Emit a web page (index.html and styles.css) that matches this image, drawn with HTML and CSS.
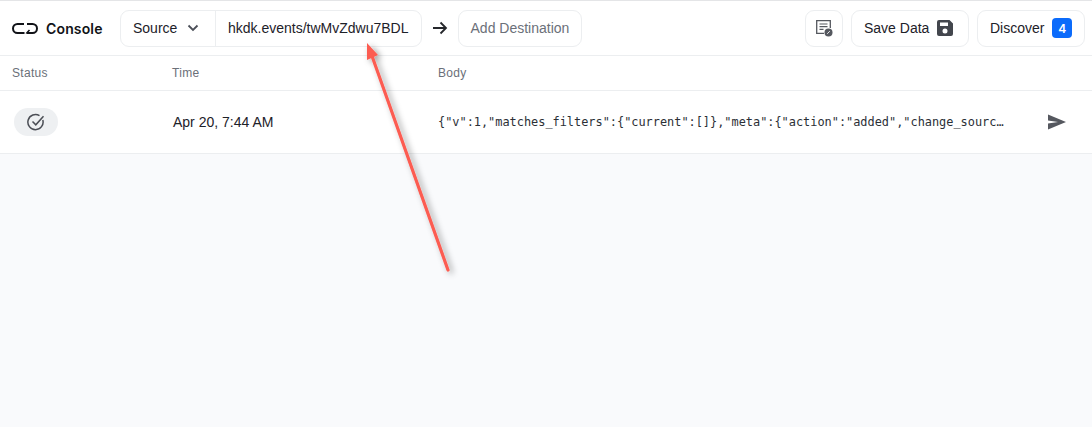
FILE: index.html
```html
<!DOCTYPE html>
<html lang="en">
<head>
<meta charset="utf-8">
<title>Console</title>
<link rel="stylesheet" href="styles.css">
</head>
<body>
<div class="page">
  <header class="topbar">
    <div class="brand">
      <svg class="logo" width="26" height="11" viewBox="0 0 26 11" fill="none" stroke="#111318" stroke-width="2">
        <path d="M12 1H5.500a4.500 4.500 0 0 0 0 9h7"/>
        <path d="M15 1h5.500a4.500 4.500 0 0 1 0 9h-5.500"/>
        <path d="M17.500 7l-2.700 3 2.700 1" stroke-width="1.500"/>
      </svg>
      <span class="brand-name">Console</span>
    </div>
    <div class="source-group">
      <button class="source-select">Source
        <svg width="12" height="8" viewBox="0 0 12 8" fill="none" stroke="#4b4f58" stroke-width="1.800"><path d="M1.500 1.500L6 6l4.500-4.500"/></svg>
      </button>
      <div class="source-url">hkdk.events/twMvZdwu7BDL</div>
    </div>
    <svg class="flow-arrow" width="16" height="14" viewBox="0 0 16 14" fill="none" stroke="#25272c" stroke-width="1.800"><path d="M1 7h13M8.500 1.500L14 7l-5.500 5.500"/></svg>
    <button class="btn btn-muted">Add Destination</button>
    <div class="spacer"></div>
    <button class="btn btn-icon" aria-label="Log">
      <svg width="18" height="18" viewBox="0 0 18 18" fill="none">
        <path d="M15.300 9V1.700H1.700v12.600h7.300" stroke="#55585f" stroke-width="1.300"/>
        <path d="M4.500 5h8M4.500 7.700h8M4.500 10.400h4" stroke="#55585f" stroke-width="1.200"/>
        <circle cx="13.500" cy="13.500" r="4" fill="#55585f"/>
        <path d="M12.200 14.800l2.600-2.600" stroke="#fff" stroke-width="0.900"/>
      </svg>
    </button>
    <button class="btn btn-save">Save Data
      <svg width="16" height="16" viewBox="0 0 16 16"><path fill="#43464d" fill-rule="evenodd" d="M2 0h10.500L16 3.500V14a2 2 0 0 1-2 2H2a2 2 0 0 1-2-2V2a2 2 0 0 1 2-2zM3 2.500v3.500h8V2.500zM8 8.500a2.500 2.500 0 1 0 0 5 2.500 2.500 0 0 0 0-5z"/></svg>
    </button>
    <button class="btn btn-discover">Discover <span class="count">4</span></button>
  </header>

  <div class="table-head">
    <div class="col-status">Status</div>
    <div class="col-time">Time</div>
    <div class="col-body">Body</div>
  </div>

  <div class="table-row">
    <div class="col-status">
      <span class="status-pill">
        <svg width="18" height="18" viewBox="0 0 18 18" fill="none" stroke="#4b4e55" stroke-width="1.500">
          <path d="M15.800 7A7.600 7.600 0 1 1 12.500 2.600"/>
          <path d="M5.500 8.500L8.800 11.800 16.500 3.300"/>
        </svg>
      </span>
    </div>
    <div class="col-time cell-time">Apr 20, 7:44 AM</div>
    <div class="col-body cell-body">{"v":1,"matches_filters":{"current":[]},"meta":{"action":"added","change_sourc…</div>
    <svg class="send" width="18" height="16" viewBox="0 0 18 16"><path fill="#55585f" d="M0 0.500L18 8 0 15.500V9.500L10 8 0 6.500z"/></svg>
  </div>

  <div class="empty"></div>

  <svg class="annotation" width="1092" height="427" viewBox="0 0 1092 427" fill="none">
    <defs>
      <filter id="arrow-shadow" x="-30%" y="-10%" width="160%" height="120%">
        <feDropShadow dx="3" dy="2" stdDeviation="3" flood-color="#000" flood-opacity="0.4"/>
      </filter>
    </defs>
    <g filter="url(#arrow-shadow)">
      <path d="M448 270L372 56" stroke="#fc5b51" stroke-width="3.200" stroke-linecap="round"/>
      <path d="M367 43L378 55 367 60z" fill="#fc5b51"/>
    </g>
  </svg>
</div>
</body>
</html>
```

FILE: styles.css
```css
* {
  box-sizing: border-box;
}

html,
body {
  margin: 0;
  height: 100%;
}

body {
  font-family: "Liberation Sans", Arial, sans-serif;
  font-size: 14px;
  color: #1d2129;
  background: #fff;
}

.page {
  position: relative;
  width: 1092px;
  height: 427px;
  display: flex;
  flex-direction: column;
  overflow: hidden;
  border-top: 1px solid #e4e5e7;
}

.topbar {
  height: 55px;
  flex: none;
  display: flex;
  align-items: center;
  padding: 0 7px 0 12px;
  border-bottom: 1px solid #eceef0;
}

.brand {
  width: 108px;
  display: flex;
  align-items: center;
  gap: 8px;
}

.brand-name {
  font-family: Inter, "Liberation Sans", sans-serif;
  font-size: 14px;
  font-weight: 600;
  letter-spacing: 0.15px;
  color: #111318;
}

.source-group {
  display: flex;
  height: 37px;
  border: 1px solid #eceef0;
  border-radius: 9px;
}

.source-select {
  width: 95px;
  display: flex;
  align-items: center;
  gap: 10px;
  padding: 0 0 0 12px;
  border: 0;
  border-right: 1px solid #eceef0;
  background: none;
  font: inherit;
  color: inherit;
}

.source-url {
  display: flex;
  align-items: center;
  padding: 0 12px;
}

.flow-arrow {
  margin: 0 10px;
}

.btn {
  height: 37px;
  display: flex;
  align-items: center;
  padding: 0 12px;
  border: 1px solid #eceef0;
  border-radius: 9px;
  background: #fff;
  font: inherit;
  color: inherit;
}

.btn-muted {
  color: #6b7079;
}

.spacer {
  flex: 1;
}

.btn-icon {
  width: 38px;
  justify-content: center;
  padding: 0;
}

.btn-save {
  width: 118px;
  margin-left: 8px;
  gap: 8px;
}

.btn-discover {
  width: 108px;
  margin-left: 8px;
  gap: 8px;
}

.count {
  width: 20px;
  height: 20px;
  display: flex;
  align-items: center;
  justify-content: center;
  border-radius: 4px;
  background: #0b6bfb;
  color: #fff;
  font-family: Inter, "Liberation Sans", sans-serif;
  font-size: 12px;
  font-weight: 600;
}

.table-head,
.table-row {
  display: flex;
  align-items: center;
  flex: none;
  padding-left: 12px;
  border-bottom: 1px solid #eceef0;
}

.table-head {
  height: 35px;
  font-size: 12px;
  color: #6b7079;
  letter-spacing: 0.3px;
}

.table-row {
  height: 63px;
}

.col-status {
  width: 160px;
}

.col-time {
  width: 266px;
}

.col-body {
  width: 574px;
}

.status-pill {
  width: 44px;
  height: 28px;
  margin-left: 2px;
  display: flex;
  align-items: center;
  justify-content: center;
  border-radius: 14px;
  background: #eef0f2;
}

.cell-time {
  padding-left: 1px;
}

.cell-body {
  font-family: "DejaVu Sans Mono", "Liberation Mono", monospace;
  font-size: 11.900px;
  color: #2b2f36;
  white-space: nowrap;
}

.send {
  margin-left: 36px;
}

.empty {
  flex: 1;
  background: #f9fafc;
}

.annotation {
  position: absolute;
  left: 0;
  top: -1px;
  pointer-events: none;
}
```
